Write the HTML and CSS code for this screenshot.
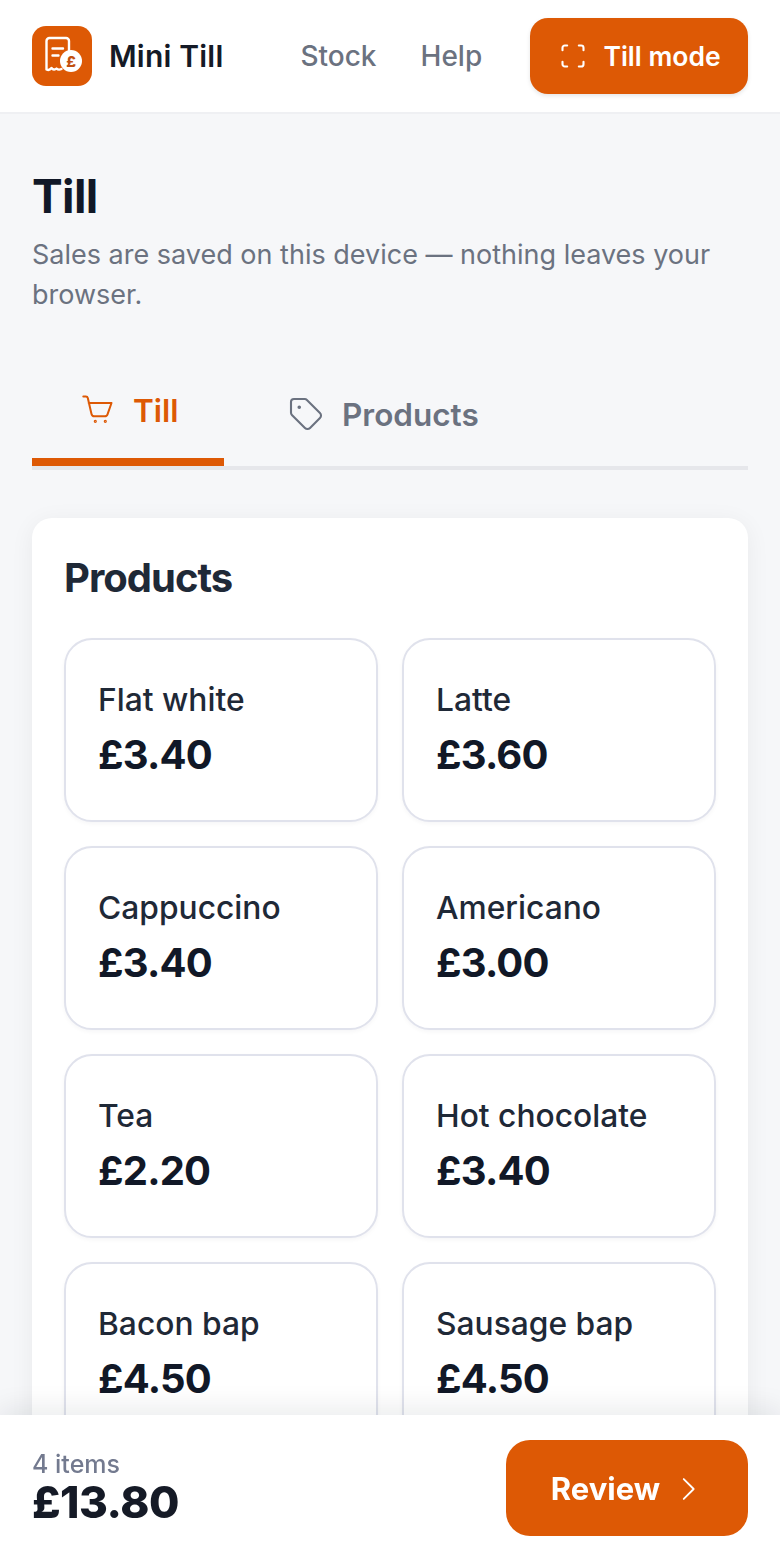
FILE: index.html
```html
<!DOCTYPE html>
<html lang="en">
<head>
  <meta charset="UTF-8">
  <meta name="viewport" content="width=device-width, initial-scale=1.0">
  <title>Mini Till</title>
  <link rel="stylesheet" href="styles.css">
</head>
<body>
  <header class="topbar">
    <div class="brand">
      <div class="brand-logo">
        <svg width="60" height="60" viewBox="0 0 60 60" fill="none">
          <path d="M14.500 32V15a3 3 0 0 1 3-3h16.500a3 3 0 0 1 3 3v10M14.500 32v11.500c2 1 3.500 .5 5-1.500 1.500 2 3.500 2 5 .5 1.500 1.500 3 1.500 5 .5" stroke="#fff" stroke-width="2.400" stroke-linecap="round" stroke-linejoin="round"/>
          <path d="M20.500 22.500h10.500M20.500 29.500h6" stroke="#fff" stroke-width="2.400" stroke-linecap="round"/>
          <circle cx="39" cy="35" r="11" fill="#fff"/>
          <text class="logo-pound" x="39" y="40.500" text-anchor="middle">£</text>
        </svg>
      </div>
      <span class="brand-name">Mini Till</span>
    </div>
    <nav class="topnav">
      <a href="#">Stock</a>
      <a href="#">Help</a>
    </nav>
    <button class="btn-mode">
      <svg width="28" height="28" viewBox="0 0 24 24" fill="none" stroke="#fff" stroke-width="1.800" stroke-linecap="round" stroke-linejoin="round">
        <path d="M3 7V5a2 2 0 0 1 2-2h2M17 3h2a2 2 0 0 1 2 2v2M21 17v2a2 2 0 0 1-2 2h-2M7 21H5a2 2 0 0 1-2-2v-2"/>
      </svg>
      Till mode
    </button>
  </header>

  <main class="content">
    <h1>Till</h1>
    <p class="intro">Sales are saved on this device — nothing leaves your browser.</p>

    <div class="tabs">
      <button class="tab active">
        <svg width="34" height="32" viewBox="0 0 34 32" fill="none" stroke="#dd5905" stroke-width="2" stroke-linecap="round" stroke-linejoin="round">
          <path d="M3.300 2.500h2.500a2 2 0 0 1 2 1.500L11.500 20a3 3 0 0 0 3 2.300h10.200a3 3 0 0 0 2.900-2.100L31.500 9H8.700"/>
          <circle cx="15.300" cy="27.300" r=".6"/>
          <circle cx="25.300" cy="27.300" r=".6"/>
        </svg>
        Till
      </button>
      <button class="tab">
        <svg width="36" height="36" viewBox="0 0 24 24" fill="none" stroke="#6b7280" stroke-width="1.400" stroke-linecap="round" stroke-linejoin="round">
          <path d="M12.600 2.600A2 2 0 0 0 11.200 2H4a2 2 0 0 0-2 2v7.200c0 .5.200 1 .6 1.400l8.700 8.700a2.400 2.400 0 0 0 3.400 0l6.600-6.600a2.400 2.400 0 0 0 0-3.400z"/>
          <circle cx="7.500" cy="7.500" r=".5" fill="#6b7280"/>
        </svg>
        Products
      </button>
    </div>

    <section class="panel">
      <h2>Products</h2>
      <div class="product-grid">
        <button class="product"><span class="product-name">Flat white</span><span class="product-price">£3.40</span></button>
        <button class="product"><span class="product-name">Latte</span><span class="product-price">£3.60</span></button>
        <button class="product"><span class="product-name">Cappuccino</span><span class="product-price">£3.40</span></button>
        <button class="product"><span class="product-name">Americano</span><span class="product-price">£3.00</span></button>
        <button class="product"><span class="product-name">Tea</span><span class="product-price">£2.20</span></button>
        <button class="product"><span class="product-name">Hot chocolate</span><span class="product-price">£3.40</span></button>
        <button class="product"><span class="product-name">Bacon bap</span><span class="product-price">£4.50</span></button>
        <button class="product"><span class="product-name">Sausage bap</span><span class="product-price">£4.50</span></button>
      </div>
    </section>
  </main>

  <footer class="basket">
    <div class="basket-info">
      <div class="basket-count">4 items</div>
      <div class="basket-total">£13.80</div>
    </div>
    <button class="btn-review">
      Review
      <svg width="34" height="34" viewBox="0 0 24 24" fill="none" stroke="#fff" stroke-width="1.300" stroke-linecap="round" stroke-linejoin="round">
        <path d="m9 5 7 7-7 7"/>
      </svg>
    </button>
  </footer>
</body>
</html>
```

FILE: styles.css
```css
* {
  margin: 0;
  padding: 0;
  box-sizing: border-box;
}

html, body {
  height: 1560px;
  overflow: hidden;
}

body {
  font-family: 'Inter', sans-serif;
  background: #f6f7f9;
  color: #111827;
}

button {
  font-family: inherit;
  border: none;
  cursor: pointer;
}

.topbar {
  height: 114px;
  background: #fff;
  border-bottom: 2px solid #eff0f3;
  padding: 0 32px;
  display: flex;
  align-items: center;
}

.brand {
  display: flex;
  align-items: center;
  gap: 17px;
  margin-right: 77px;
}

.brand-logo {
  width: 60px;
  height: 60px;
  border-radius: 14px;
  background: #dd5905;
}

.brand-logo svg {
  display: block;
}

.logo-pound {
  font-size: 15px;
  font-weight: 800;
  fill: #c2500f;
}

.brand-name {
  font-size: 30px;
  font-weight: 600;
  letter-spacing: 0.2px;
  color: #151a26;
}

.topnav {
  display: flex;
  gap: 44px;
}

.topnav a {
  font-size: 28px;
  font-weight: 500;
  color: #6b7280;
  text-decoration: none;
}

.btn-mode {
  margin-left: auto;
  height: 76px;
  width: 218px;
  border-radius: 18px;
  background: #dd5905;
  color: #fff;
  font-size: 26.500px;
  font-weight: 600;
  display: flex;
  align-items: center;
  justify-content: center;
  gap: 16px;
  padding-left: 2px;
  box-shadow: 0 2px 4px rgba(0, 0, 0, 0.1);
}

.content {
  padding: 56px 32px 0;
}

h1 {
  font-size: 46px;
  line-height: 52px;
  font-weight: 700;
  letter-spacing: -0.6px;
  color: #111827;
}

.intro {
  margin-top: 13px;
  font-size: 27px;
  line-height: 40px;
  color: #6b7280;
}

.tabs {
  margin-top: 53px;
  display: flex;
  align-items: stretch;
  height: 102px;
  border-bottom: 4px solid #e6e7eb;
}

.tab {
  background: none;
  font-size: 31.500px;
  font-weight: 600;
  color: #6b7280;
  display: flex;
  align-items: center;
  gap: 18px;
  padding: 0 16px 2px 64px;
  border-bottom: 4px solid transparent;
}

.tab.active {
  color: #dd5905;
  width: 192px;
  gap: 19px;
  padding: 0 0 6px 48px;
  border-bottom: 8px solid #dd5905;
}

.panel {
  margin-top: 48px;
  background: #fff;
  border-radius: 20px;
  padding: 32px;
  box-shadow: 0 4px 24px rgba(17, 24, 39, 0.06);
}

h2 {
  font-size: 40px;
  line-height: 56px;
  font-weight: 700;
  letter-spacing: -1px;
  color: #1f2937;
}

.product-grid {
  margin-top: 32px;
  display: grid;
  grid-template-columns: 1fr 1fr;
  gap: 24px;
}

.product {
  height: 184px;
  background: #fff;
  border: 2px solid #e0e2ec;
  border-radius: 28px;
  padding: 0 32px 2px;
  display: flex;
  flex-direction: column;
  justify-content: center;
  align-items: flex-start;
  gap: 11px;
  text-align: left;
  box-shadow: 0 2px 4px rgba(17, 24, 39, 0.04);
}

.product-name {
  font-size: 31.750px;
  line-height: 40px;
  font-weight: 500;
  color: #1f2937;
}

.product-price {
  font-size: 40px;
  line-height: 48px;
  font-weight: 700;
  letter-spacing: -0.8px;
  color: #111827;
}

.basket {
  position: fixed;
  left: 0;
  right: 0;
  bottom: 0;
  height: 145px;
  background: #fff;
  padding: 0 32px;
  display: flex;
  align-items: center;
  justify-content: space-between;
  box-shadow: 0 -8px 24px rgba(17, 24, 39, 0.08);
}

.basket-count {
  font-size: 25px;
  line-height: 28px;
  font-weight: 500;
  color: #737a8f;
}

.basket-total {
  font-size: 44px;
  line-height: 48px;
  font-weight: 800;
  letter-spacing: -0.5px;
  color: #151a26;
}

.btn-review {
  width: 242px;
  height: 96px;
  border-radius: 24px;
  background: #dd5905;
  color: #fff;
  font-size: 31px;
  font-weight: 700;
  display: flex;
  align-items: center;
  justify-content: center;
  gap: 11px;
  padding: 2px 0 0 2px;
}
```
